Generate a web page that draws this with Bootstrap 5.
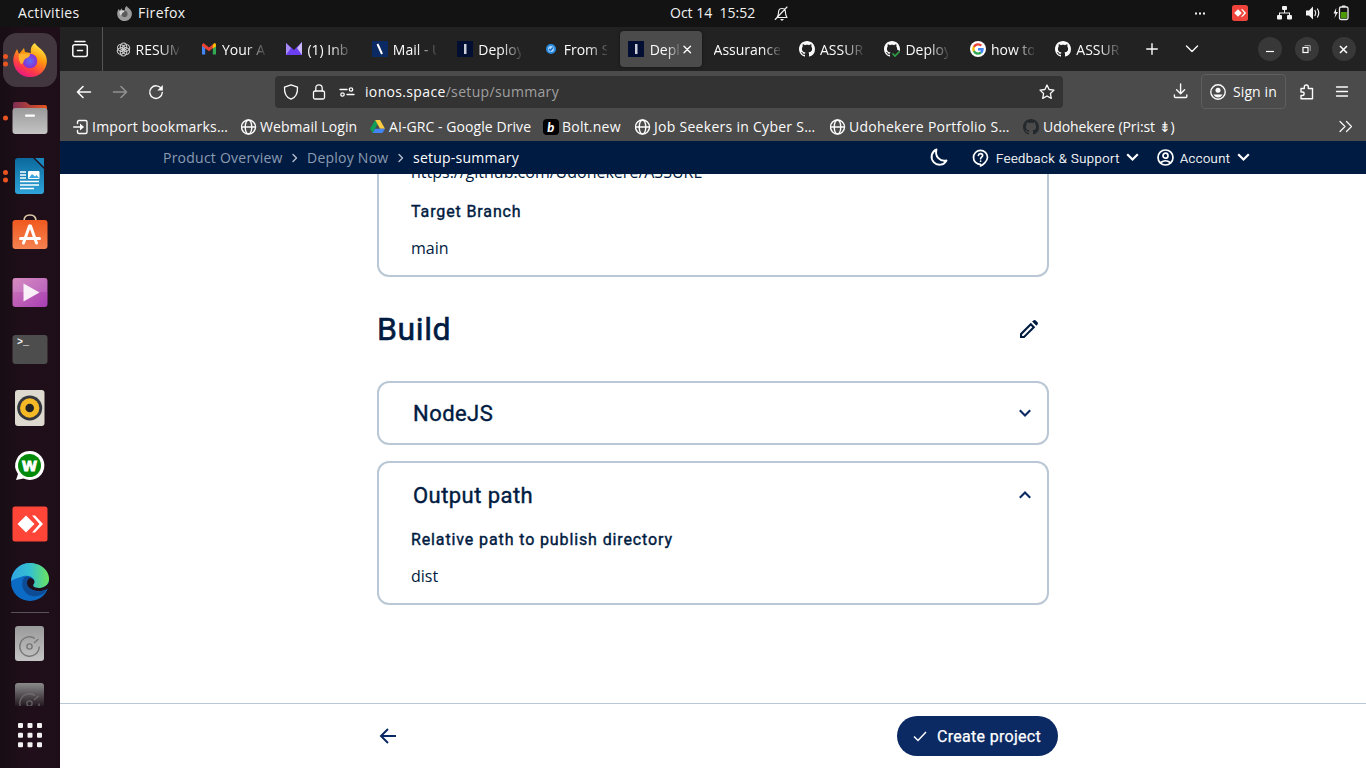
<!DOCTYPE html>
<html lang="en">
<head>
<meta charset="utf-8">
<meta name="viewport" content="width=device-width, initial-scale=1">
<title>setup-summary</title>
<link href="https://cdn.jsdelivr.net/npm/bootstrap@5.3.0/dist/css/bootstrap.min.css" rel="stylesheet">
<style>
  html, body { height: 100%; overflow: hidden; }
  body { font: 14px/20px "Open Sans", "Noto Sans", sans-serif; background: #fff; color: #001b41; }
  svg { display: block; flex: none; overflow: visible; stroke-width: 1.4; }
  .ln { fill: none; stroke: currentColor; stroke-linecap: round; stroke-linejoin: round; }
  .desk { height: 768px; }

  /* system bar */
  .sysbar { height: 27px; padding-bottom: 1px; background: #131313; color: #f2f2f2; display: grid; grid-template-columns: 117px 553px 105px 415px 40px 46px 28px 29px 1fr; }
  .sysbar > * { display: flex; align-items: center; white-space: nowrap; }
  .act { padding-left: 18px; letter-spacing: .4px; }
  .ff-name { margin-left: 6px; letter-spacing: .4px; }
  .clock { white-space: pre !important; }

  /* dock */
  .dock { width: 60px; padding-top: 4px; background: linear-gradient(90deg, #180d14, #200f1a 50%, #1d0e18); }
  .dock-item { height: 58px; position: relative; flex: none; }
  .dock-item.on::before { content: ""; position: absolute; inset: 2px 3px; border-radius: 14px; background: #42373f; }
  .dock-item svg { position: relative; }
  .dock-item .pips { position: absolute; left: 3px; top: 50%; transform: translateY(-50%); }
  .dock-rule { width: 38px; height: 1px; margin-top: 1px; flex: none; background: #5a5256; }
  .disk-item { padding-top: 2px; }
  .dock-cut { margin-top: 12px; }
  .disk-cut { overflow: hidden; }
  .apps { margin-top: 17px; }

  /* tabs */
  .tabstrip { height: 44px; background: #222; color: #fbfbfb; }
  .view-btn { width: 43px; margin-right: 4px; border-right: 1px solid #555; }
  .tab-cell { width: 85.45px; height: 36px; padding-left: 8.5px; }
  .tab-cell.active { padding-left: 0; }
  .tab-inner { width: 82px; height: 36px; padding-left: 8px; background: #4b4b4b; border-radius: 4px; box-shadow: 0 0 3px #0008; }
  .tab-label { width: 43px; margin-left: 5px; padding-top: 1px; overflow: hidden; white-space: nowrap; -webkit-mask-image: linear-gradient(90deg, #000 55%, #0002); mask-image: linear-gradient(90deg, #000 55%, #0002); }
  .tab-label.short { width: 30px; margin-left: 6px; }
  .tab-label.long { width: 66px; margin-left: 0; -webkit-mask-image: linear-gradient(90deg, #000 75%, #0002); mask-image: linear-gradient(90deg, #000 75%, #0002); }
  .win-btn { width: 24px; height: 24px; border-radius: 50%; background: #383838; }
  .plus { margin-left: 13.500px; }
  .caret { margin-left: 27px; }
  .wins { margin-left: 59px; gap: 13px; }

  /* toolbar */
  .toolbar { background: #4b4b4b; color: #fbfbfb; }
  .tool-row { height: 41px; }
  .urlbox { width: 788px; height: 32px; margin-left: 111px; border-radius: 4px; background: #333; }
  .url-dim { color: #a0a0a0; }
  .t-back { margin-left: 16px; }
  .t-fwd, .t-re { margin-left: 20px; }
  .u-lock, .u-perm { margin-left: 13px; }
  .u-text { margin-left: 10px; letter-spacing: .34px; }
  .t-dl { margin-left: 111px; }
  .signin { width: 85px; height: 35px; margin-left: 13px; border: 1px solid #5e5e5e; border-radius: 4px; }
  .s-text { margin-left: 7px; letter-spacing: .1px; }
  .t-ext { margin-left: 12px; }
  .t-menu { margin-left: 22px; }
  .bookmarks { height: 29px; display: grid; grid-template-columns: 168px 129px 173px 92px 195px 193px 316px auto; padding-left: 13px; }
  .bookmarks > * { display: flex; align-items: center; gap: 3px; white-space: nowrap; letter-spacing: .07px; }
  .bookmarks > .w1 { gap: 4px; letter-spacing: -.07px; }
  .bookmarks > .w2 { letter-spacing: .22px; }
  .bookmarks > .w3 { letter-spacing: .28px; }

  /* product header */
  .appbar { height: 33px; background: #001b41; color: #fff; padding-left: 103px; }
  .crumb { color: #8c9bb1; }
  .c1, .c2, .c3, .h-fb, .h-ac { flex: none; white-space: nowrap; letter-spacing: .24px; }
  .c1 { width: 120px; }
  .c2 { width: 82px; }
  .c3 { width: 516px; }
  .sep { margin: 0 9px; }
  .hdr-item { font-family: Roboto, sans-serif; font-size: 13px; font-weight: 300; padding-top: 2px; -webkit-text-stroke: .2px; }
  .h-help { margin-left: 24px; }
  .h-fb { margin-left: 7px; width: 130px; letter-spacing: .5px; }
  .h-acc { margin-left: 18px; }
  .h-ac { margin-left: 6px; width: 57px; letter-spacing: .45px; }

  /* page */
  .page-area { height: 529px; overflow: hidden; }
  .col-main { width: 672px; margin-left: 317px; }
  .panel { border: 2px solid #bac8d5; border-radius: 12px; padding: 0 32px; font-size: 16px; line-height: 24px; }
  .panel-first { height: 128px; margin-top: -25px; padding-top: 11px; border-top: 0; border-radius: 0 0 12px 12px; }
  .head-font { font-family: Roboto, sans-serif; font-weight: 400; -webkit-text-stroke: .4px; }
  .field-label { font-size: 16px; letter-spacing: .88px; line-height: 24px; margin: 16px 0 12px; }
  .page-h { font-size: 32px; line-height: 40px; margin: 0; letter-spacing: .6px; -webkit-text-stroke: .6px; }
  .panel-h { font-size: 22px; line-height: 28px; letter-spacing: .45px; margin: 2px 0 0; padding-left: 2px; }
  .build-row { height: 104px; padding-right: 11px; }
  .p-node { height: 64px; padding-right: 16px; margin-bottom: 16px; }
  .p-out { height: 144px; padding-top: 17px; padding-right: 16px; }
  .out-label { margin-top: 18px; }
  .foot { height: 65px; border-top: 1px solid #bac8d5; padding-left: 317px; }
  .go { width: 161px; height: 40px; border-radius: 20px; background: #0b2a63; color: #fff; font-size: 16px; margin-left: 497px; letter-spacing: .3px; -webkit-text-stroke: .25px; }
  .go svg { margin-left: 16px; }
  .go span { margin-left: 10px; padding-top: 2px; }
</style>
</head>
<body>
<svg width="0" height="0" class="position-absolute">
  <defs>
    <linearGradient id="ff" x1=".8" y1="0" x2=".3" y2="1"><stop offset="0" stop-color="#fff44f"/><stop offset=".4" stop-color="#ff980e"/><stop offset=".75" stop-color="#ff3b47"/><stop offset="1" stop-color="#e31587"/></linearGradient>
    <radialGradient id="ffp"><stop offset="0" stop-color="#5b6df8"/><stop offset="1" stop-color="#8a2fd0"/></radialGradient>
    <linearGradient id="wr" x2="0" y2="1"><stop stop-color="#0b699c"/><stop offset="1" stop-color="#2fa3da"/></linearGradient>
    <linearGradient id="fo" x2="1"><stop stop-color="#7c2d53"/><stop offset="1" stop-color="#e95420"/></linearGradient>
    <linearGradient id="gy" x2="0" y2="1"><stop stop-color="#9a9a9a"/><stop offset="1" stop-color="#c4c4c4"/></linearGradient>
    <linearGradient id="gyd" x2="0" y2="1"><stop stop-color="#8b8b8b"/><stop offset="1" stop-color="#241820"/></linearGradient>
    <linearGradient id="pk" x2="1" y2="1"><stop stop-color="#d07cb8"/><stop offset="1" stop-color="#a83fb4"/></linearGradient>
    <linearGradient id="ed" x2="1"><stop stop-color="#31a5e4"/><stop offset=".5" stop-color="#35c1d0"/><stop offset="1" stop-color="#6be35c"/></linearGradient>
    <linearGradient id="or" x2="0" y2="1"><stop stop-color="#f0591f"/><stop offset="1" stop-color="#f58250"/></linearGradient>
    <symbol id="globe" viewBox="0 0 16 16"><g class="ln"><circle cx="7.500" cy="8" r="7"/><ellipse cx="7.500" cy="8" rx="3.300" ry="7"/><path d="M.5 8h14"/></g></symbol>
    <symbol id="gh" viewBox="0 0 16 16"><path fill="currentColor" d="M8 0C3.58 0 0 3.58 0 8c0 3.54 2.29 6.53 5.47 7.59.4.07.55-.17.55-.38 0-.19-.01-.82-.01-1.49-2.01.37-2.53-.49-2.69-.94-.09-.23-.48-.94-.82-1.13-.28-.15-.68-.52-.01-.53.63-.01 1.08.58 1.23.82.72 1.21 1.87.87 2.33.66.07-.52.28-.87.51-1.07-1.78-.2-3.64-.89-3.64-3.95 0-.87.31-1.59.82-2.15-.08-.2-.36-1.02.08-2.12 0 0 .67-.21 2.2.82.64-.18 1.32-.27 2-.27s1.36.09 2 .27c1.53-1.04 2.2-.82 2.2-.82.44 1.1.16 1.92.08 2.12.51.56.82 1.27.82 2.15 0 3.07-1.87 3.75-3.65 3.95.29.25.54.73.54 1.48 0 1.07-.01 1.93-.01 2.2 0 .21.15.46.55.38A8.01 8.01 0 0 0 16 8c0-4.42-3.58-8-8-8"/></symbol>
    <symbol id="ionos" viewBox="0 0 16 16"><path fill="#020f33" d="M0 0h16v16H0z"/><path fill="#c9ced9" d="M7 3h2.500v10H7z"/></symbol>
    <symbol id="disk" viewBox="0 0 29 35"><g fill="none" stroke="#777" stroke-width="1.400"><path d="M20 12.500a9.700 9.700 0 1 0 4.200 8"/><circle cx="14.500" cy="20.500" r="2.600"/><path d="m19 17 4.500-4"/></g></symbol>
    <symbol id="fox" viewBox="0 0 34 34"><path fill="url(#ff)" d="M22 0c1 3 7 6 10 11 4 7 1 16-5 20-7 5-17 4-22-2C0 24-1 16 2 10l2-4 2 5 5-6 1 4 6 1c-1-5 1-8 4-10z"/><circle cx="17" cy="18" r="7.300" fill="url(#ffp)"/><path fill="#ffb02e" d="M6 11c4-1 7 0 11 0 0 3-3 4-5 5-2 2-1 5-4 5-2-3-3-6-2-10z"/></symbol>
  </defs>
</svg>

<div class="desk d-flex flex-column">
  <div class="sysbar">
    <span class="act">Activities</span>
    <span><svg width="15" height="15" viewBox="0 0 34 34"><path fill="#9b9b9b" d="M22 0c1 3 7 6 10 11 4 7 1 16-5 20-7 5-17 4-22-2C0 24-1 16 2 10l2-4 2 5 5-6 1 4 6 1c-1-5 1-8 4-10z"/><circle cx="17" cy="18" r="7" fill="#5c5c5c"/><path fill="#d5d5d5" d="M6 11c4-1 7 0 11 0 0 3-3 4-5 5-2 2-1 5-4 5-2-3-3-6-2-10z"/></svg><span class="ff-name">Firefox</span></span>
    <span class="clock">Oct 14  15:52</span>
    <span><svg width="14" height="15" viewBox="0 0 14 15"><g class="ln" stroke-width="1.100"><path d="M2 11.500c2-2 1-5 2-7.500.7-2 5.300-2 6 0 1 2.500 0 5.500 2 7.500zM.2 13.500 12 1"/></g><path fill="currentColor" d="M5 13h4l-2 2z"/></svg></span>
    <span class="ps-1"><svg width="11" height="3" viewBox="0 0 11 3" fill="currentColor"><path d="M1 .5h2v2H1zM5 .5h2v2H5zM9 .5h2v2H9z"/></svg></span>
    <span><svg width="20" height="16" viewBox="0 0 20 16"><rect x="2" width="16" height="16" rx="2.500" fill="#ef443b"/><path fill="#fff" d="m8 4.200 3.800 3.800L8 11.800 4.200 8zM11 4.200h1.500L16.200 8l-3.700 3.800H11L14.200 8z"/></svg></span>
    <span><svg width="17" height="14" viewBox="0 0 17 14" fill="currentColor"><rect x="6" width="5" height="4" rx="1"/><rect x="1" y="9" width="5" height="4.500" rx="1"/><rect x="11" y="9" width="5" height="4.500" rx="1"/><path d="M8 4h1v2.500h5V9h-1V7.500H4V9H3V6.500h5z"/></svg></span>
    <span><svg width="17" height="14" viewBox="0 0 17 14"><path fill="currentColor" d="M2 4.500h3L9 .5v13l-4-4H2z"/><path class="ln" d="M11 4.500q1.500 2.500 0 5M13.500 3q2.500 4 0 8" stroke-width="1.200"/></svg></span>
    <span><svg width="17" height="16" viewBox="0 0 17 16"><path fill="currentColor" d="M3.200 3 .5 8.500h2L1.500 13 5 7H3z"/><rect x="6.500" y="2" width="8.500" height="12.500" rx="1.500" fill="none" stroke="#eee" stroke-width="1.300"/><path fill="#eee" d="M9 .5h3.500V2H9z"/><path fill="#4e9a06" d="M7.800 7h6v6.200h-6z"/></svg></span>
  </div>

  <div class="d-flex flex-grow-1">
    <nav class="dock d-flex flex-column align-items-center flex-shrink-0">
      <div class="dock-item on w-100 d-flex align-items-center justify-content-center"><svg class="pips" width="6" height="14" fill="#e95420"><circle cx="2.500" cy="3.500" r="2.500"/><circle cx="2.500" cy="11" r="2.500"/></svg><svg width="34" height="34"><use href="#fox"/></svg></div>
      <div class="dock-item w-100 d-flex align-items-center justify-content-center"><svg class="pips" width="6" height="6" fill="#e95420"><circle cx="2.500" cy="3" r="2.500"/></svg><svg width="36" height="34"><path fill="url(#fo)" d="M3 1h11l4 3h15q2 0 2 2v10H1V3q0-2 2-2z"/><rect x=".5" y="7" width="35" height="26" rx="3" fill="url(#gy)"/><rect x="13" y="13.500" width="10" height="2.200" rx="1" fill="#fff"/></svg></div>
      <div class="dock-item w-100 d-flex align-items-center justify-content-center"><svg class="pips" width="6" height="14" fill="#e95420"><circle cx="2.500" cy="3.500" r="2.500"/><circle cx="2.500" cy="11" r="2.500"/></svg><svg width="30" height="36"><path fill="url(#wr)" d="M3 0h15l11 11v22q0 3-3 3H3q-3 0-3-3V3q0-3 3-3z"/><path fill="#1b86bd" d="M20 0h9v9z"/><path stroke="#fff" stroke-width="1.600" d="M5 14h6M5 17h6M5 20h6M5 23.500h19M5 27h19M5 30.500h14"/><rect x="13" y="13" width="11.500" height="8" rx="1" fill="#fff"/><path fill="#3ba7de" d="m14 20 3-4 3 2.500 1.500-1.500 2.500 3z"/></svg></div>
      <div class="dock-item w-100 d-flex align-items-center justify-content-center"><svg width="36" height="36"><path fill="none" stroke="#dcc9a7" stroke-width="1.700" d="M12 5q0-6 6-6t6 6"/><rect x=".5" y="4" width="35" height="29" rx="3" fill="url(#or)"/><g stroke="#fff" stroke-width="3" stroke-linecap="round"><path d="m17.500 10-6 17M18.500 10l6 17"/><path d="M8.500 22.500h19"/></g></svg></div>
      <div class="dock-item w-100 d-flex align-items-center justify-content-center"><svg width="36" height="29"><rect x=".5" width="35" height="29" rx="3" fill="url(#pk)"/><path fill="#fff" opacity=".9" d="m11.500 5.500 16 9-16 9z"/><path fill="#fff" opacity=".12" d="M1 0h34v14H1z"/></svg></div>
      <div class="dock-item w-100 d-flex align-items-center justify-content-center"><svg width="36" height="30"><rect x=".5" width="35" height="29" rx="3" fill="#4d4d4d"/><text x="5" y="10" font-family="Liberation Mono" font-size="10" font-weight="bold" fill="#eee">&gt;_</text></svg></div>
      <div class="dock-item w-100 d-flex align-items-center justify-content-center"><svg width="30" height="36"><rect width="29.500" height="36" rx="3" fill="#dfdad0"/><circle cx="14.700" cy="18" r="12.500" fill="#34373d"/><circle cx="14.700" cy="18" r="9.700" fill="#f4b924"/><circle cx="14.700" cy="18" r="4.300" fill="#222"/></svg></div>
      <div class="dock-item w-100 d-flex align-items-center justify-content-center"><svg width="30" height="30"><path fill="#fff" d="M14.500 0a14.500 14.500 0 1 1-6 27.500L1 29l2-6A14.500 14.500 0 0 1 14.500 0z"/><circle cx="14.500" cy="14.500" r="11.500" fill="#028a0a"/><text x="14.500" y="19.500" text-anchor="middle" font-family="DejaVu Sans" font-size="14" font-weight="bold" fill="#fff" stroke="#fff" stroke-width=".8">W</text></svg></div>
      <div class="dock-item w-100 d-flex align-items-center justify-content-center"><svg width="36" height="36"><rect x=".5" y=".5" width="35" height="35" rx="2.500" fill="#ff4438"/><path fill="#fff" d="m14 9.500 8.500 8.500-8.500 8.500L5.500 18zM20 9.500h3L31 18l-8 8.500h-3l7.500-8.500z"/></svg></div>
      <div class="dock-item w-100 d-flex align-items-center justify-content-center"><svg width="38" height="38"><circle cx="19" cy="19" r="19" fill="#0c6bc4"/><path fill="url(#ed)" d="M0 18C1 7 9 0 19 0c12 0 20 9 19 17-1 6-6 8-10 8-4 0-6-1-6-3 1-1 2-3 1-5-2-5-9-5-13-3-5 1-8 3-10 4z"/><path fill="#0d4b95" d="M13 15c-4 6-1 16 8 18 5 1 10-1 13-4-7 3-15 0-16-7 0-3 1-5 3-7-3-2-6-2-8 0z"/><path fill="#1f101a" d="M19 15c-5 3-3 9 1 11 5 3 12 3 18-1V19c-2 4-6 6-10 6-4 0-6-1-6-3 1-1 2-3 1-5-1-1-2-2-4-2z"/><path fill="#0d4b95" d="M19 26c5 3 11 3 15 1 1 0 1 1 0 2-4 4-12 4-15-3z"/></svg></div>
      <div class="dock-rule"></div>
      <div class="dock-item disk-item w-100 d-flex align-items-center justify-content-center"><svg width="30" height="35"><rect width="29" height="35" rx="3" fill="url(#gy)"/><use href="#disk" width="29" height="35"/></svg></div>
      <div class="dock-cut w-100 d-flex justify-content-center"><svg class="disk-cut" width="30" height="23"><path fill="url(#gyd)" d="M3 0h23q3 0 3 3v20H0V3q0-3 3-3z"/><use href="#disk" width="29" height="35" opacity=".7"/></svg></div>
      <div class="apps"><svg width="24" height="25" fill="#f4f1f3"><g id="r3"><rect width="5" height="5" rx="1"/><rect x="9.500" width="5" height="5" rx="1"/><rect x="19" width="5" height="5" rx="1"/></g><use href="#r3" y="9.700"/><use href="#r3" y="19.300"/></svg></div>
    </nav>

    <main class="flex-grow-1 d-flex flex-column">
      <div class="tabstrip d-flex align-items-center">
        <div class="view-btn h-100 d-flex align-items-center ps-2"><svg width="24" height="18" viewBox="0 0 24 18"><g class="ln" stroke-width="1.500"><path d="M7 1.500h10"/><rect x="4.800" y="4.800" width="14.500" height="11.700" rx="2"/><path d="M9.500 10.500h5"/></g></svg></div>
        <div class="tab-cell d-flex align-items-center"><svg width="15" height="15" viewBox="0 0 16 16"><g fill="none" stroke="#c9c9c9" stroke-width="1.100"><ellipse cx="8" cy="4.800" rx="3.400" ry="3.800"/><ellipse cx="8" cy="4.800" rx="3.400" ry="3.800" transform="rotate(60 8 8)"/><ellipse cx="8" cy="4.800" rx="3.400" ry="3.800" transform="rotate(120 8 8)"/><ellipse cx="8" cy="4.800" rx="3.400" ry="3.800" transform="rotate(180 8 8)"/><ellipse cx="8" cy="4.800" rx="3.400" ry="3.800" transform="rotate(240 8 8)"/><ellipse cx="8" cy="4.800" rx="3.400" ry="3.800" transform="rotate(300 8 8)"/></g></svg><span class="tab-label">RESUM</span></div>
        <div class="tab-cell d-flex align-items-center"><svg width="16" height="16" viewBox="0 0 16 16"><path fill="#4285f4" d="M1 4v9.500h3.200V6z"/><path fill="#34a853" d="M15 4v9.500h-3.200V6z"/><path fill="#ea4335" d="M1 3.500 2.500 2 8 6.500 13.500 2 15 4.500l-7 5.700L1 5z"/><path fill="#fbbc04" d="M11.800 4 13.500 2q1.500 0 1.500 2v1.500l-3.200 2z"/></svg><span class="tab-label">Your A</span></div>
        <div class="tab-cell d-flex align-items-center"><svg width="16" height="14" viewBox="0 0 16 14"><path fill="#6b3ff0" d="M0 1 8 8l8-8v13H0z"/><path fill="#a88bf5" d="M0 13V1l5 5z"/><path fill="#cbb8fb" d="m16 0-5 6 5 7z"/></svg><span class="tab-label">(1) Inb</span></div>
        <div class="tab-cell d-flex align-items-center"><svg width="16" height="16"><path fill="#0b2a63" d="M0 0h16v16H0z"/><path stroke="#fff" stroke-width="2" d="m5.500 3 4.500 10"/></svg><span class="tab-label">Mail - U</span></div>
        <div class="tab-cell d-flex align-items-center"><svg width="16" height="16"><use href="#ionos"/></svg><span class="tab-label">Deploy</span></div>
        <div class="tab-cell d-flex align-items-center"><svg width="16" height="16"><circle cx="8" cy="8" r="4" fill="#a9d4ff" stroke="#2b8de0" stroke-width="2"/><path fill="none" stroke="#1f6fc0" stroke-width="1.500" d="m6 8 1.500 1.500L10 6.500"/></svg><span class="tab-label">From S</span></div>
        <div class="tab-cell active d-flex align-items-center"><div class="tab-inner d-flex align-items-center"><svg width="16" height="16"><use href="#ionos"/></svg><span class="tab-label short">Deploy</span><svg width="9" height="9" class="ms-1" viewBox="0 0 9 9"><path class="ln" d="m0 1.200 6.500 6.500m0-6.500L0 7.700"/></svg></div></div>
        <div class="tab-cell d-flex align-items-center"><span class="tab-label long">Assurance</span></div>
        <div class="tab-cell d-flex align-items-center"><svg width="16" height="16"><use href="#gh"/></svg><span class="tab-label">ASSUR</span></div>
        <div class="tab-cell d-flex align-items-center"><svg width="16" height="16"><use href="#gh"/><circle cx="12" cy="13" r="4.500" fill="#222"/><path fill="none" stroke="#2ea043" stroke-width="1.700" d="m8.500 12.500 2.500 2.500 4.500-4.500"/></svg><span class="tab-label">Deploy</span></div>
        <div class="tab-cell d-flex align-items-center"><svg width="16" height="16"><circle cx="8" cy="8" r="8" fill="#fff"/><g fill="none" stroke-width="2.400"><path stroke="#ea4335" d="M3.900 6A4.600 4.600 0 0 1 11.300 4.700"/><path stroke="#fbbc05" d="M3.900 10.200a4.600 4.600 0 0 1 0-4.400"/><path stroke="#34a853" d="M11 11.500a4.600 4.600 0 0 1-7.100-1.500"/><path stroke="#4285f4" d="M8 8.200h4.500q0 2-1.500 3.300"/></g></svg><span class="tab-label">how to</span></div>
        <div class="tab-cell d-flex align-items-center"><svg width="16" height="16"><use href="#gh"/></svg><span class="tab-label">ASSUR</span></div>
        <svg width="12" height="12" viewBox="0 0 12 12" class="plus"><path class="ln" d="M6 .7v10.600M.7 6h10.600"/></svg>
        <svg width="14" height="8" viewBox="0 0 14 8" class="caret"><path class="ln" d="m1.500 1 5.500 5.500L12.500 1"/></svg>
        <div class="wins d-flex">
          <div class="win-btn d-flex align-items-center justify-content-center"><svg width="8" height="8"><path stroke="#fff" stroke-width="1.200" d="M0 6.500h8"/></svg></div>
          <div class="win-btn d-flex align-items-center justify-content-center"><svg width="9" height="9"><rect x="1" y="2.500" width="5" height="5" fill="none" stroke="#fff" stroke-width="1.200"/><path fill="none" stroke="#aaa" stroke-width="1" d="M2.500.6h5.700V6"/></svg></div>
          <div class="win-btn d-flex align-items-center justify-content-center"><svg width="9" height="9"><path stroke="#fff" stroke-width="1.500" d="m1 1 7 7m0-7L1 8"/></svg></div>
        </div>
      </div>

      <div class="toolbar">
        <div class="tool-row d-flex align-items-center">
          <svg class="t-back" width="16" height="14" viewBox="0 0 16 14"><path class="ln" stroke-width="1.600" d="M14.500 7H1.500M7 1.500 1.500 7 7 12.500"/></svg>
          <svg class="t-fwd" width="16" height="14" viewBox="0 0 16 14" opacity=".4"><path class="ln" stroke-width="1.600" d="M1.500 7h13M9 1.500 14.500 7 9 12.500"/></svg>
          <svg class="t-re" width="16" height="16" viewBox="0 0 16 16"><path class="ln" d="M13.500 5A6.300 6.300 0 1 0 14.300 8.500"/><path fill="currentColor" d="M14.800 1v5.500H9.300z"/></svg>
          <div class="urlbox d-flex align-items-center">
            <svg class="ms-2" width="16" height="16" viewBox="0 0 16 16"><path class="ln" stroke-width="1.300" d="M8 .8 14.500 3.200c.3 6-2 10.300-6.500 12-4.500-1.700-6.800-6-6.500-12z"/></svg>
            <svg class="u-lock" width="14" height="16" viewBox="0 0 14 16"><g class="ln" stroke-width="1.300"><rect x="1.500" y="7" width="11" height="8" rx="1.500"/><path d="M3.800 7V4q0-3.200 3.200-3.200T10.200 4v3"/></g></svg>
            <svg class="u-perm" width="16" height="10" viewBox="0 0 16 10"><g class="ln" stroke-width="1.300"><circle cx="12" cy="2.500" r="1.700"/><path d="M1 2.500h7M15 7.500H8"/><circle cx="3.500" cy="7.500" r="1.700"/></g></svg>
            <span class="u-text">ionos.space<span class="url-dim">/setup/summary</span></span>
            <svg class="ms-auto me-2" width="16" height="16" viewBox="0 0 16 16"><path class="ln" stroke-width="1.300" d="m8 1 2.100 4.500 4.900.6-3.600 3.400.9 4.900L8 12l-4.300 2.400.9-4.900L1 6.100l4.900-.6z"/></svg>
          </div>
          <svg class="t-dl" width="14" height="16" viewBox="0 0 14 16"><path class="ln" d="M6.600 0v9.500M2.600 5.800l4 4 4-4M.4 11v1.500q0 1 1 1h10.400q1 0 1-1V11"/></svg>
          <div class="signin d-flex align-items-center"><svg class="ms-2" width="16" height="16" viewBox="0 0 16 16"><circle cx="8" cy="8" r="7.200" class="ln"/><circle cx="8" cy="6.200" r="2.500" fill="currentColor"/><path fill="currentColor" d="M3.500 10.500h9q-1.500 3-4.500 3t-4.500-3z"/></svg><span class="s-text">Sign in</span></div>
          <svg class="t-ext" width="16" height="16" viewBox="0 0 16 16"><path class="ln" d="M3 4.500h3.300V3q0-2 2-2t2 2v1.500H14.500v10.300H3V11.500h1.300q1.800 0 1.800-1.800T4.300 8H3z"/></svg>
          <svg class="t-menu" width="12" height="12" viewBox="0 0 12 12"><path class="ln" stroke-width="1.300" d="M.5 1h11M.5 5.500h11M.5 10h11"/></svg>
        </div>
        <div class="bookmarks">
          <span class="w2"><svg width="16" height="16" viewBox="0 0 16 16"><path class="ln" d="M4.500 4.500V3q0-1.500 1.500-1.500h6.500Q14 1.500 14 3v10q0 1.500-1.500 1.500H6Q4.500 14.500 4.500 13v-1.500M.7 8h9"/><path fill="currentColor" d="M7 4.500 11 8l-4 3.500z"/></svg>Import bookmarks…</span>
          <span><svg width="16" height="16"><use href="#globe"/></svg>Webmail Login</span>
          <span><svg width="16" height="13" viewBox="0 0 17 14"><path fill="#0f9d58" d="M5.400 0 0 9.300 2.700 14 8 4.700z"/><path fill="#ffcd40" d="M5.400 0h5.300L16 9.300h-5.300z"/><path fill="#4285f4" d="M5.300 9.300H16L13.300 14H2.700z"/></svg>AI-GRC - Google Drive</span>
          <span class="w2"><svg width="16" height="16"><rect width="16" height="16" rx="4" fill="#000"/><text x="8" y="12.500" text-anchor="middle" font-family="Lato" font-weight="900" font-style="italic" font-size="13" fill="#fff">b</text></svg>Bolt.new</span>
          <span class="w3"><svg width="16" height="16"><use href="#globe"/></svg>Job Seekers in Cyber S…</span>
          <span class="w3"><svg width="16" height="16"><use href="#globe"/></svg>Udohekere Portfolio S…</span>
          <span class="w1"><svg width="16" height="16" color="#24292e"><use href="#gh"/></svg>Udohekere (Pri:st ⇟)</span>
          <span><svg width="14" height="12" viewBox="0 0 14 12"><path class="ln" stroke-width="1.200" d="m1 .5 5 5-5 5M7.500.5l5 5-5 5"/></svg></span>
        </div>
      </div>

      <header class="appbar d-flex align-items-center">
        <span class="crumb c1">Product Overview</span>
        <svg class="sep" width="6" height="8" viewBox="0 0 6 8" color="#b4bfcd"><path class="ln" d="m1 .5 3.500 3.500L1 7.500"/></svg>
        <span class="crumb c2">Deploy Now</span>
        <svg class="sep" width="6" height="8" viewBox="0 0 6 8" color="#b4bfcd"><path class="ln" d="m1 .5 3.500 3.500L1 7.500"/></svg>
        <span class="c3">setup-summary</span>
        <svg class="h-moon" width="19" height="19" viewBox="0 0 19 19"><path class="ln" stroke-width="1.900" d="M7.500 1.500a7.900 7.900 0 1 0 10 11C11 14 5.500 8.500 7.500 1.500z"/></svg>
        <svg class="h-help" width="17" height="18" viewBox="0 0 17 18"><g class="ln" stroke-width="1.700"><path d="M8.500 15.400V17c2-1 7-4.500 7-8.700A7 7 0 1 0 8.500 15.400z"/><path d="M6.400 6.400c.3-2.400 4.200-2.300 4.200 0 0 1.600-2 1.700-2 3.300M8.600 12v.2"/></g></svg>
        <span class="hdr-item h-fb">Feedback &amp; Support</span>
        <svg class="h-c1" width="13" height="9" viewBox="0 0 13 9"><path fill="none" stroke="#fff" stroke-width="2.200" d="m1.200 1.200 5.300 5.300 5.300-5.300"/></svg>
        <svg class="h-acc" width="17" height="17" viewBox="0 0 17 17"><g class="ln" stroke-width="1.700"><circle cx="8.500" cy="8.500" r="7.500"/><circle cx="8.500" cy="6.700" r="2.500"/><path d="M3.800 13.500q4.700-3.500 9.400 0"/></g></svg>
        <span class="hdr-item h-ac">Account</span>
        <svg class="h-c2" width="13" height="9" viewBox="0 0 13 9"><path fill="none" stroke="#fff" stroke-width="2.200" d="m1.200 1.200 5.300 5.300 5.300-5.300"/></svg>
      </header>

      <section class="page-area">
        <div class="col-main">
          <div class="panel panel-first">
            <div>https://github.com/Udohekere/ASSURE</div>
            <h3 class="head-font field-label">Target Branch</h3>
            <div>main</div>
          </div>
          <div class="build-row d-flex align-items-center justify-content-between">
            <h1 class="head-font page-h">Build</h1>
            <svg width="18" height="18" viewBox="0 0 19 19"><path fill="#001b41" fill-rule="evenodd" d="M0 19v-4.700L11.400 2.900l4.700 4.700L4.700 19zm2.200-2.200h1.600l9.200-9.200-1.600-1.600-9.200 9.200zM12.800 1.700 14.200.4q1.200-1 2.400.1l1.900 1.900q1 1.200 0 2.300L17.300 6.100z"/></svg>
          </div>
          <div class="panel p-node d-flex align-items-center justify-content-between">
            <h2 class="head-font panel-h">NodeJS</h2>
            <svg width="12" height="8" viewBox="0 0 12 8"><path fill="none" stroke="#0b2a63" stroke-width="2.100" d="m.8 1.200 5.200 5.200 5.200-5.200"/></svg>
          </div>
          <div class="panel p-out">
            <div class="d-flex align-items-center justify-content-between">
              <h2 class="head-font panel-h">Output path</h2>
              <svg width="12" height="8" viewBox="0 0 12 8"><path fill="none" stroke="#0b2a63" stroke-width="2.100" d="m.8 6.800 5.200-5.200 5.200 5.200"/></svg>
            </div>
            <h3 class="head-font field-label out-label">Relative path to publish directory</h3>
            <div>dist</div>
          </div>
        </div>
      </section>

      <footer class="foot d-flex align-items-center">
        <svg width="23" height="18" viewBox="0 0 23 18"><path fill="none" stroke="#0b2a63" stroke-width="2" d="M19 9H4.500M11 2 4 9l7 7"/></svg>
        <button class="btn go head-font d-flex align-items-center p-0 border-0"><svg width="14" height="11" viewBox="0 0 14 11"><path fill="none" stroke="#fff" stroke-width="1.500" d="m1 5.500 4 4L13 1"/></svg><span>Create project</span></button>
      </footer>
    </main>
  </div>
</div>
<script src="https://cdn.jsdelivr.net/npm/bootstrap@5.3.0/dist/js/bootstrap.bundle.min.js"></script>
</body>
</html>
